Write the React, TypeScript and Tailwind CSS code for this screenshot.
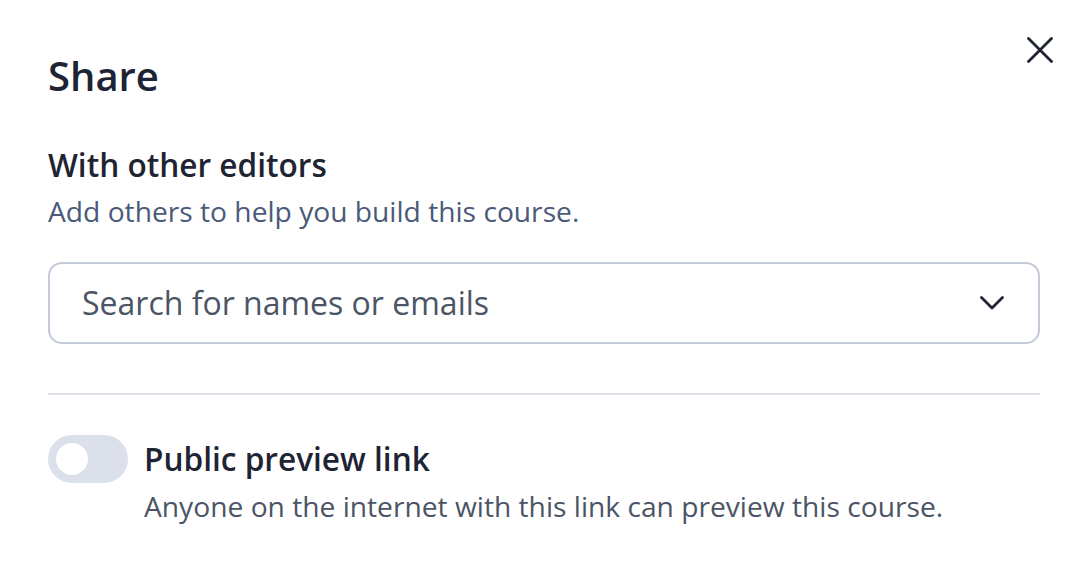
export default function App() {
  return (
    <div className="relative min-h-[576px] w-[1082px] bg-white pl-12 pr-[42px] pt-[52px] font-['Open_Sans',sans-serif]">
      <button className="absolute right-[29px] top-[37px] text-[#1e2433]">
        <svg width="26" height="26" viewBox="0 0 26 26" fill="none" stroke="currentColor" strokeWidth="2.8" strokeLinecap="round">
          <path d="M1.5 1.5 24.5 24.5M24.5 1.5 1.5 24.5" />
        </svg>
      </button>

      <h2 className="text-[40px] leading-[48px] font-semibold text-[#1e2433]">Share</h2>

      <section className="mt-[45px]">
        <h3 className="text-[31.6px] leading-[40px] font-semibold text-[#1e2433]">With other editors</h3>
        <p className="mt-[8px] text-[28.2px] leading-[36px] text-[#4a5a78]">
          Add others to help you build this course.
        </p>

        <div className="mt-[33px] flex h-[82px] items-center justify-between rounded-[14px] border-2 border-[#c3cbd9] pl-[32px] pr-[34px]">
          <span className="text-[32px] leading-[40px] text-[#4b5565]">Search for names or emails</span>
          <svg width="24" height="14" viewBox="0 0 24 14" fill="none" stroke="#1e2433" strokeWidth="2.8" strokeLinecap="round" strokeLinejoin="round">
            <path d="M1.5 1.5 12 12 22.5 1.5" />
          </svg>
        </div>
      </section>

      <hr className="mt-[49px] border-t-2 border-[#dde1e8]" />

      <section className="mt-[40px] flex items-start gap-[16px]">
        <div className="flex h-[48px] w-[80px] shrink-0 items-center rounded-full bg-[#dbe0ea] px-[8px]">
          <div className="h-[32px] w-[32px] rounded-full bg-white" />
        </div>
        <div>
          <div className="text-[31.6px] leading-[48px] font-semibold text-[#1e2433]">Public preview link</div>
          <p className="mt-[5px] text-[28.2px] leading-[36px] text-[#4b5565]">
            Anyone on the internet with this link can preview this course.
          </p>
        </div>
      </section>
    </div>
  );
}
